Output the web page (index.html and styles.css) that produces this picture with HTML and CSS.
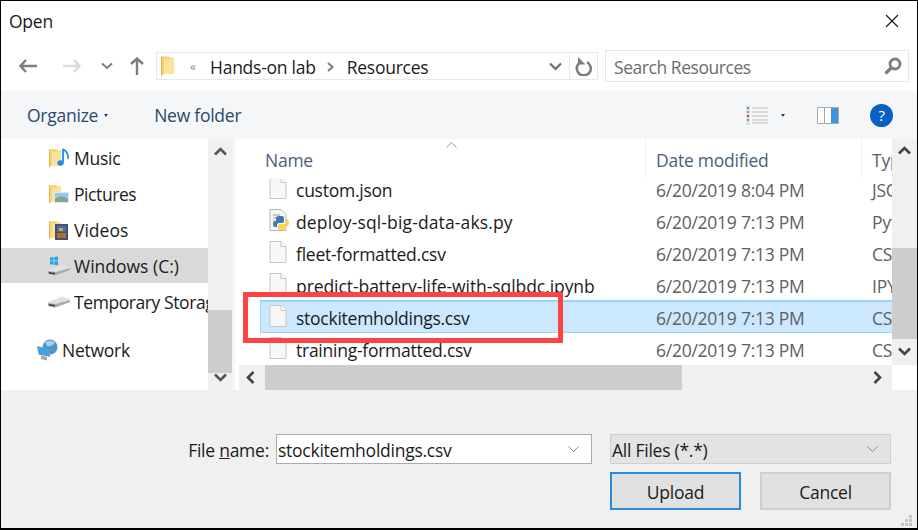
FILE: index.html
```html
<!DOCTYPE html>
<html lang="en">
<head>
    <meta charset="UTF-8">
    <title>Open</title>
    <link rel="stylesheet" href="styles.css">
</head>
<body>
    <svg class="sprite" width="0" height="0">
        <symbol id="page" viewBox="0 0 18 24">
            <path d="M1 1.500H12L17 6.500V22.500H1Z" fill="#f7f7f7" stroke="#c6c6c6"/>
            <path d="M12 1.500V6.500H17" fill="#fff" stroke="#c6c6c6"/>
        </symbol>
        <symbol id="folder" viewBox="0 0 14 20">
            <path d="M0 .5H8L9 2H13V18H3L0 20Z" fill="#f6d26f"/>
            <path d="M3 3H13V18H3Z" fill="#fbe29a"/>
            <path d="M0 .5H1V20H0Z" fill="#dcb451"/>
        </symbol>
        <symbol id="drive" viewBox="0 0 22 12">
            <path d="M0 6L14 .5L22 3V6L7 11.500L0 10Z" fill="#e2e2e2"/>
            <path d="M0 7L8 8L22 4V6L7 11.500L0 10Z" fill="#ababab"/>
            <path d="M1 8L7 9V10.500L1 9.500Z" fill="#3a3a3a"/>
        </symbol>
    </svg>

    <div class="dialog">
        <div class="titlebar">
            <span class="title">Open</span>
            <svg class="close" width="14" height="14" viewBox="0 0 14 14"><path d="M1 1L13 13M13 1L1 13" stroke="#1a1a1a" stroke-width="1.200" fill="none"/></svg>
        </div>

        <div class="navbar">
            <div class="nav-buttons">
                <svg class="nav-back" width="18" height="14" viewBox="0 0 18 14"><path d="M7 1L1.500 7L7 13M2 7H18" stroke="#7d7d7d" stroke-width="2.400" fill="none"/></svg>
                <svg class="nav-forward" width="18" height="14" viewBox="0 0 18 14"><path d="M11 1L16.500 7L11 13M0 7H16" stroke="#dcdcdc" stroke-width="2.400" fill="none"/></svg>
                <svg class="nav-down" width="12" height="8" viewBox="0 0 12 8"><path d="M1 1.500L6 6L11 1.500" stroke="#7d7d7d" stroke-width="2" fill="none"/></svg>
                <svg class="nav-up" width="14" height="18" viewBox="0 0 14 18"><path d="M1 7L7 1.500L13 7M7 2V18" stroke="#7d7d7d" stroke-width="2.400" fill="none"/></svg>
            </div>
            <div class="address">
                <svg class="address-folder" width="14" height="20"><use href="#folder"/></svg>
                <span class="crumb-more">«</span>
                <span class="crumb">Hands-on lab</span>
                <svg class="crumb-arrow" width="7" height="10" viewBox="0 0 7 10"><path d="M1 1L5.500 5L1 9" stroke="#7d7d7d" stroke-width="2" fill="none"/></svg>
                <span class="crumb">Resources</span>
                <svg class="address-drop" width="13" height="9" viewBox="0 0 13 9"><path d="M1 1.500L6.500 7L12 1.500" stroke="#6e6e6e" stroke-width="2.200" fill="none"/></svg>
                <div class="refresh">
                    <svg width="17" height="19" viewBox="0 0 17 19"><path d="M5 5.500A7 7 0 1 0 12 5.200" stroke="#7d7d7d" stroke-width="2.600" fill="none"/><path d="M3 0V7.500H10.500Z" fill="#7d7d7d"/></svg>
                </div>
            </div>
            <div class="search">
                <span>Search Resources</span>
                <svg width="18" height="18" viewBox="0 0 18 18"><circle cx="11" cy="7" r="5" stroke="#7d7d7d" stroke-width="2.800" fill="none"/><path d="M7.500 10.500L1.500 16.500" stroke="#7d7d7d" stroke-width="3.200"/></svg>
            </div>
        </div>

        <div class="toolbar">
            <span class="tool tool-organize">Organize</span>
            <span class="caret"></span>
            <span class="tool tool-new">New folder</span>
            <div class="tool-icons">
                <svg class="views" width="22" height="20" viewBox="0 0 22 20">
                    <path d="M0 0H4V20H0Z" fill="#dfe3e8"/>
                    <path d="M1 2H3V4H1Z" fill="#5b8fc7"/><path d="M1 6H3V8H1Z" fill="#c7a045"/><path d="M1 10H3V12H1Z" fill="#d0492f"/><path d="M1 14H3V16H1Z" fill="#77a557"/>
                    <path d="M6 3H22M6 7H22M6 11H22M6 15H22M6 18H22" stroke="#bdbdbd"/>
                </svg>
                <span class="caret"></span>
                <svg class="pane" width="22" height="17" viewBox="0 0 22 17">
                    <path d="M.5.500H21.500V16.500H.5Z" fill="#fff" stroke="#a8a8a8"/>
                    <path d="M14 1H21V16H14Z" fill="#3f94e0"/>
                    <path d="M7.500 1V16" stroke="#a8a8a8"/>
                </svg>
                <span class="help">?</span>
            </div>
        </div>

        <div class="main">
            <div class="tree">
                <ul class="tree-list">
                    <li class="tree-row">
                        <svg width="22" height="20" viewBox="0 0 22 20"><use href="#folder" width="13" height="20" x="1"/><path d="M15 1V14" stroke="#1f8ce0" stroke-width="1.800"/><ellipse cx="12.500" cy="15" rx="3.200" ry="2.700" fill="#1f8ce0"/><path d="M15 1Q21 5 20 11" stroke="#1f8ce0" stroke-width="1.600" fill="none"/></svg>
                        <span>Music</span>
                    </li>
                    <li class="tree-row">
                        <svg width="22" height="20" viewBox="0 0 22 20"><use href="#folder" width="13" height="20" x="1"/><path d="M6 8H21V19H6Z" fill="#dbe7ef"/><path d="M7 9H20V13H7Z" fill="#9cc7e2"/><path d="M7 14L13 12L20 14V18H7Z" fill="#7fa68f"/></svg>
                        <span class="tree-tight">Pictures</span>
                    </li>
                    <li class="tree-row">
                        <svg width="22" height="20" viewBox="0 0 22 20"><use href="#folder" width="13" height="20" x="1"/><path d="M7 4H20V20H7Z" fill="#47526a"/><path d="M9 6H18V12H9Z" fill="#3c6db0"/><path d="M9 13H18V18H9Z" fill="#a7702f"/><path d="M11 8H15V11H11Z" fill="#d9a32f"/></svg>
                        <span class="tree-wide">Videos</span>
                    </li>
                    <li class="tree-row tree-row-active">
                        <svg width="22" height="20" viewBox="0 0 22 20"><use href="#drive" y="8" width="22" height="12"/><path d="M2 1.500L5.500 1V4.500H2ZM6.300 1L10 .5V4.500H6.300ZM2 5.300H5.500V8.800L2 8.300ZM6.300 5.300H10V9.300L6.300 8.800Z" fill="#19a6ea"/></svg>
                        <span class="tree-wide">Windows (C:)</span>
                    </li>
                    <li class="tree-row">
                        <svg width="22" height="20" viewBox="0 0 22 20"><use href="#drive" y="4" width="22" height="12"/></svg>
                        <span class="tree-tight">Temporary Storage (D:)</span>
                    </li>
                    <li class="tree-row tree-row-top">
                        <svg width="22" height="22" viewBox="0 0 22 22"><circle cx="14" cy="8" r="7.500" fill="#4d94c9"/><path d="M9 3Q14 0 19 3Q17 8 11 7Z" fill="#a6d0ea"/><path d="M1 7L14 10.500V18L2.500 15.500Z" fill="#8d949b"/><path d="M2 8L13 11V17L3.300 14.800Z" fill="#35a5ee"/><path d="M5 16.500L11 18V21.500L5 20Z" fill="#a3a9af"/></svg>
                        <span>Network</span>
                    </li>
                </ul>
                <div class="vbar">
                    <svg width="13" height="9" viewBox="0 0 13 9"><path d="M1 7.500L6.500 2L12 7.500" stroke="#555" stroke-width="2.600" fill="none"/></svg>
                    <div class="vbar-track vbar-track-tree"><div class="thumb"></div></div>
                    <svg width="13" height="9" viewBox="0 0 13 9"><path d="M1 1.500L6.500 7L12 1.500" stroke="#555" stroke-width="2.600" fill="none"/></svg>
                </div>
            </div>

            <div class="files">
                <div class="files-top">
                    <div class="list">
                        <div class="list-head">
                            <svg class="sort" width="11" height="6" viewBox="0 0 11 6"><path d="M.5 5.500L5.500 .7L10.500 5.500" stroke="#9a9a9a" fill="none"/></svg>
                            <div class="head-cell head-name">Name</div>
                            <div class="head-cell">Date modified</div>
                            <div class="head-cell">Type</div>
                        </div>
                        <div class="rows">
                            <div class="row">
                                <div class="cell-name"><svg width="18" height="24"><use href="#page"/></svg><span>custom.json</span></div>
                                <div class="cell-date">6/20/2019 8:04 PM</div>
                                <div class="cell-type">JSON File</div>
                            </div>
                            <div class="row">
                                <div class="cell-name">
                                    <svg width="20" height="24" viewBox="0 0 20 24">
                                        <path d="M1 1.500H12L17 6.500V22.500H1Z" fill="#f7f7f7" stroke="#b5b5b5"/>
                                        <path d="M4 7H11M4 10H8M4 13H6M4 16H6" stroke="#9a9a9a"/>
                                        <path d="M7 13V10Q7 8 10 8H13Q15 8 15 10V13Q15 15 13 15H10Q8 15 8 17V19H6Q4 19 4 16Q4 13 7 13Z" fill="#3d7ab0"/>
                                        <path d="M17 11V14Q17 16 14 16H11Q9 16 9 18V20Q9 22 12 22H14Q16 22 16 20V18H18Q20 18 20 15Q20 11 17 11Z" fill="#fdd447"/>
                                    </svg>
                                    <span class="name-wide">deploy-sql-big-data-aks.py</span>
                                </div>
                                <div class="cell-date">6/20/2019 7:13 PM</div>
                                <div class="cell-type">Python File</div>
                            </div>
                            <div class="row">
                                <div class="cell-name"><svg width="18" height="24"><use href="#page"/></svg><span>fleet-formatted.csv</span></div>
                                <div class="cell-date">6/20/2019 7:13 PM</div>
                                <div class="cell-type">CSV File</div>
                            </div>
                            <div class="row">
                                <div class="cell-name"><svg width="18" height="24"><use href="#page"/></svg><span class="name-mid">predict-battery-life-with-sqlbdc.ipynb</span></div>
                                <div class="cell-date">6/20/2019 7:13 PM</div>
                                <div class="cell-type">IPYNB File</div>
                            </div>
                            <div class="row row-selected">
                                <div class="cell-name"><svg width="18" height="24"><use href="#page"/></svg><span>stockitemholdings.csv</span></div>
                                <div class="cell-date">6/20/2019 7:13 PM</div>
                                <div class="cell-type">CSV File</div>
                            </div>
                            <div class="row">
                                <div class="cell-name"><svg width="18" height="24"><use href="#page"/></svg><span>training-formatted.csv</span></div>
                                <div class="cell-date">6/20/2019 7:13 PM</div>
                                <div class="cell-type">CSV File</div>
                            </div>
                        </div>
                    </div>
                    <div class="vbar vbar-files">
                        <svg width="13" height="9" viewBox="0 0 13 9"><path d="M1 7.500L6.500 2L12 7.500" stroke="#444" stroke-width="2.600" fill="none"/></svg>
                        <div class="vbar-track vbar-track-files"><div class="thumb"></div></div>
                        <svg width="13" height="9" viewBox="0 0 13 9"><path d="M1 1.500L6.500 7L12 1.500" stroke="#444" stroke-width="2.600" fill="none"/></svg>
                    </div>
                </div>
                <div class="hbar-row">
                    <div class="hbar">
                        <svg width="9" height="13" viewBox="0 0 9 13"><path d="M7.500 1L2 6.500L7.500 12" stroke="#444" stroke-width="2.600" fill="none"/></svg>
                        <div class="hbar-track"><div class="thumb"></div></div>
                        <svg width="9" height="13" viewBox="0 0 9 13"><path d="M1.500 1L7 6.500L1.500 12" stroke="#444" stroke-width="2.600" fill="none"/></svg>
                    </div>
                </div>
            </div>
        </div>

        <div class="footer">
            <label class="file-label">File <u>n</u>ame:</label>
            <div class="combo combo-name">
                <span>stockitemholdings.csv</span>
                <svg width="11" height="6" viewBox="0 0 11 6"><path d="M.5.500L5.500 5.500L10.500.5" stroke="#8a8a8a" fill="none"/></svg>
            </div>
            <div class="combo combo-filter">
                <span>All Files (*.*)</span>
                <svg width="11" height="6" viewBox="0 0 11 6"><path d="M.5.500L5.500 5.500L10.500.5" stroke="#8a8a8a" fill="none"/></svg>
            </div>
            <button class="btn btn-default">Upload</button>
            <button class="btn btn-cancel">Cancel</button>
            <svg class="grip" width="12" height="12" viewBox="0 0 12 12"><path d="M8 0H11V3H8ZM4 4H7V7H4ZM8 4H11V7H8ZM0 8H3V11H0ZM4 8H7V11H4ZM8 8H11V11H8Z" fill="#c4c4c4"/></svg>
        </div>

        <div class="callout"></div>
    </div>
</body>
</html>
```

FILE: styles.css
```css
* {
    box-sizing: border-box;
}

html, body {
    margin: 0;
    padding: 0;
}

body {
    font-family: "Open Sans", "Noto Sans", sans-serif;
    font-size: 17.5px;
    letter-spacing: -0.25px;
    color: #1b1b1b;
    background: #000;
}

.sprite {
    position: absolute;
}

svg {
    display: block;
    flex: none;
}

.dialog {
    position: relative;
    width: 918px;
    height: 530px;
    border: 1px solid #000;
    border-bottom-width: 2px;
    background: #fff;
    display: flex;
    flex-direction: column;
    overflow: hidden;
}

.titlebar {
    height: 44px;
    flex: none;
    display: flex;
    align-items: center;
    justify-content: space-between;
    padding: 0 18px 4px 8px;
}

.navbar {
    height: 46px;
    flex: none;
    display: flex;
    align-items: flex-start;
    padding-top: 5px;
    padding-right: 8px;
}

.nav-buttons {
    width: 155px;
    height: 32px;
    flex: none;
    display: flex;
    align-items: center;
    padding-left: 18px;
}

.nav-forward {
    margin-left: 26px;
}

.nav-down {
    margin-left: 20px;
}

.nav-up {
    margin-left: 17px;
}

.address {
    width: 442px;
    height: 28px;
    margin-top: 2px;
    flex: none;
    display: flex;
    align-items: center;
    border: 1px solid #e8e8e8;
    padding-left: 4px;
}

.crumb {
    padding-top: 2px;
}

.crumb-more {
    margin-left: 15px;
    width: 20px;
    font-size: 12px;
    color: #8a8a8a;
}

.crumb-arrow {
    margin: 1px 13px 0 11px;
}

.address-drop {
    margin-left: auto;
    margin-right: 7px;
}

.refresh {
    width: 28px;
    height: 100%;
    flex: none;
    display: flex;
    align-items: center;
    justify-content: center;
    border-left: 1px solid #e8e8e8;
}

.search {
    width: 304px;
    height: 32px;
    margin-left: 7px;
    flex: none;
    display: flex;
    align-items: center;
    justify-content: space-between;
    border: 1px solid #e8e8e8;
    padding: 0 6px 0 8px;
    color: #6d6d6d;
    letter-spacing: -0.45px;
}

.search span {
    padding-top: 2px;
}

.toolbar {
    height: 48px;
    flex: none;
    display: flex;
    align-items: center;
    background: #f5f6f7;
    color: #2a4a6b;
    padding-left: 26px;
}

.caret {
    width: 0;
    height: 0;
    border: 2.5px solid transparent;
    border-top: 3px solid #2a3f5a;
    border-bottom: 0;
}

.tool-organize + .caret {
    margin-left: 6px;
}

.tool-new {
    margin-left: 46px;
}

.tool-icons {
    margin-left: auto;
    display: flex;
    align-items: center;
    padding-right: 24px;
}

.views {
    margin-right: 13px;
}

.pane {
    margin-left: 32px;
}

.help {
    width: 23px;
    height: 23px;
    margin-left: 31px;
    border-radius: 50%;
    background: #0a5fc4;
    color: #fff;
    font-size: 15px;
    line-height: 23px;
    text-align: center;
}

.main {
    height: 251px;
    flex: none;
    display: flex;
    overflow: hidden;
}

.tree {
    width: 231px;
    flex: none;
    display: flex;
}

.tree-list {
    width: 207px;
    flex: none;
    margin: 0;
    padding: 1px 0 0;
    list-style: none;
    overflow: hidden;
}

.tree-row {
    height: 36px;
    display: flex;
    align-items: center;
    gap: 3px;
    padding-left: 47px;
    white-space: nowrap;
}

.tree-row span {
    margin-left: 1px;
}

.tree-tight {
    letter-spacing: -0.42px;
}

.tree-wide {
    letter-spacing: 0;
}

.tree-row-active {
    background: #d9d9d9;
    height: 35px;
    margin-bottom: 1px;
}

.tree-row-top {
    margin-top: 12px;
    padding-left: 35px;
    gap: 3px;
}

.vbar {
    width: 24px;
    flex: none;
    display: flex;
    flex-direction: column;
    align-items: center;
    background: #f0f0f0;
    padding: 8px 0 8px;
}

.vbar-track {
    align-self: stretch;
    flex: 1;
}

.thumb {
    background: #cdcdcd;
}

.vbar-track-tree {
    padding-top: 154px;
}

.vbar-track-tree .thumb {
    height: 63px;
}

.files {
    margin-left: 3px;
    flex: 1;
    min-width: 0;
    display: flex;
    flex-direction: column;
    box-shadow: -3px 0 0 #f5f6f7;
}

.files-top {
    height: 226px;
    flex: none;
    display: flex;
}

.list {
    flex: 1;
    min-width: 0;
    overflow: hidden;
}

.list-head {
    position: relative;
    z-index: 1;
    height: 40px;
    display: grid;
    grid-template-columns: 411px 216px 1fr;
    background: #fff;
    color: #4c607a;
    white-space: nowrap;
}

.head-cell {
    padding: 9px 10px 0;
    border-right: 1px solid #eef0f2;
}

.head-name {
    padding-left: 30px;
}

.sort {
    position: absolute;
    left: 211px;
    top: 3px;
}

.rows {
    margin-top: -6px;
}

.row {
    height: 32px;
    margin-left: 25px;
    display: grid;
    grid-template-columns: 386px 216px 1fr;
    align-items: center;
    white-space: nowrap;
}

.row-selected {
    background: #cce8ff;
    box-shadow: inset 0 1px 0 #99d1ff, inset 0 -1px 0 #99d1ff, inset 1px 0 0 #99d1ff, 0 -1px 0 #99d1ff;
}

.cell-name {
    display: flex;
    align-items: center;
    gap: 9px;
    padding-left: 9px;
    overflow: hidden;
}

.cell-name svg {
    margin-top: -2px;
}

.cell-name span {
    padding-top: 2px;
}

.cell-name svg[width="20"] {
    margin-right: -2px;
}

.name-wide {
    letter-spacing: 0.13px;
}

.name-mid {
    letter-spacing: -0.07px;
}

.cell-date,
.cell-type {
    padding-top: 2px;
    padding-left: 10px;
    color: #5f5f5f;
}

.vbar-files {
    width: 25px;
    padding: 7px 0 9px;
}

.vbar-track-files {
    padding-top: 93px;
}

.vbar-track-files .thumb {
    height: 91px;
}

.hbar-row {
    height: 25px;
    flex: none;
    padding-left: 4px;
}

.hbar {
    width: 653px;
    height: 25px;
    display: flex;
    align-items: center;
    background: #f0f0f0;
    padding: 0 10px 0 7px;
}

.hbar-track {
    flex: 1;
    height: 100%;
    margin: 0 10px;
}

.hbar-track .thumb {
    width: 417px;
    height: 100%;
}

.footer {
    position: relative;
    flex: 1;
    background: #f0f0f0;
    display: grid;
    grid-template-columns: 275px 316px 18px 131px 19px 131px;
    grid-template-rows: 30px 38px;
    row-gap: 8px;
    align-content: start;
    padding-top: 44px;
}

.file-label {
    text-align: right;
    padding-top: 1px;
    padding-right: 7px;
    line-height: 30px;
}

.combo {
    display: flex;
    align-items: center;
    justify-content: space-between;
    padding: 0 12px 0 1px;
    border: 1px solid #ababab;
}

.combo span {
    padding-top: 2px;
}

.combo-name {
    grid-column: 2;
    background: #fff;
}

.combo-filter {
    grid-column: 4 / 7;
    background: #e3e3e3;
    border-color: #cfcfcf;
}

.btn {
    font: inherit;
    letter-spacing: inherit;
    color: inherit;
    background: #e1e1e1;
    border: 2px solid #cfcfcf;
    padding: 2px 0 0;
}

.btn-default {
    grid-column: 4;
    grid-row: 2;
    border-color: #2a8ae0;
}

.btn-cancel {
    grid-column: 6;
    grid-row: 2;
}

.grip {
    position: absolute;
    right: 4px;
    bottom: 1px;
}

.callout {
    position: absolute;
    left: 242px;
    top: 291px;
    width: 320px;
    height: 51px;
    border: 5px solid #ff4343;
}
```
